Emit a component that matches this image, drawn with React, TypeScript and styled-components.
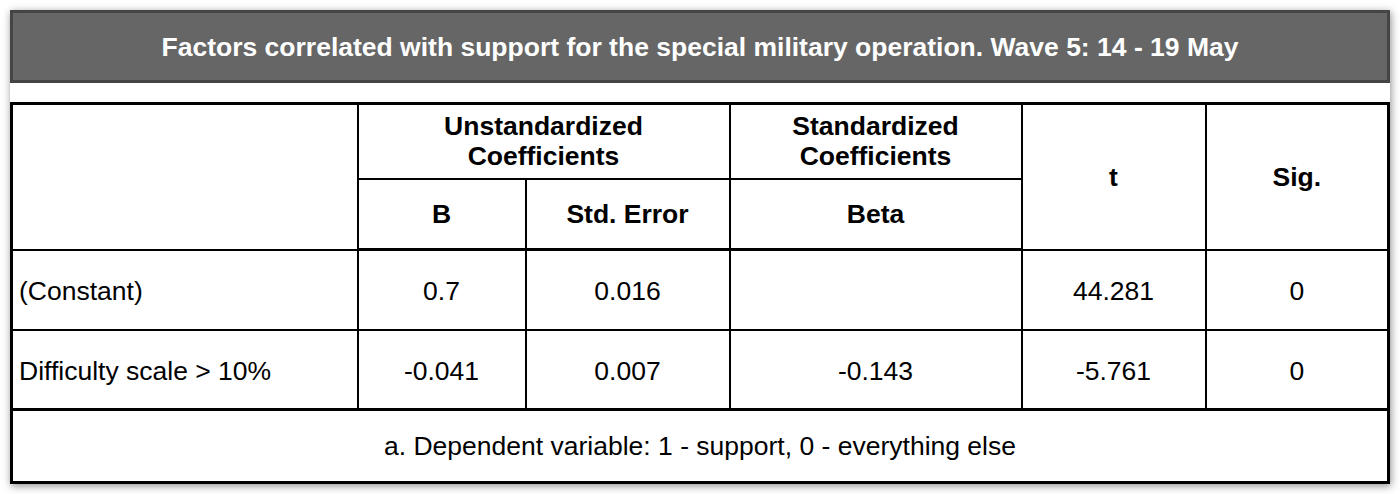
import styled, { createGlobalStyle } from 'styled-components';

const GlobalStyle = createGlobalStyle`
  body {
    margin: 0;
    background: #fff;
    font-family: 'Liberation Sans', Arial, sans-serif;
  }
`;

const rows = [
  { label: '(Constant)', b: '0.7', se: '0.016', beta: '', t: '44.281', sig: '0' },
  { label: 'Difficulty scale > 10%', b: '-0.041', se: '0.007', beta: '-0.143', t: '-5.761', sig: '0' },
];

export default function App() {
  return (
    <>
      <GlobalStyle />
      <Frame>
        <TitleBar>
          Factors correlated with support for the special military operation. Wave 5: 14 - 19 May
        </TitleBar>
        <Gap />
        <Table>
          <colgroup>
            <col style={{ width: 346 }} />
            <col style={{ width: 168 }} />
            <col style={{ width: 204 }} />
            <col style={{ width: 292 }} />
            <col style={{ width: 184 }} />
            <col style={{ width: 183 }} />
          </colgroup>
          <thead>
            <HeadRow $h={75}>
              <Th rowSpan={2} />
              <Th colSpan={2}>
                Unstandardized
                <br />
                Coefficients
              </Th>
              <Th>
                Standardized
                <br />
                Coefficients
              </Th>
              <Th rowSpan={2}>t</Th>
              <Th rowSpan={2}>Sig.</Th>
            </HeadRow>
            <HeadRow $h={71}>
              <Th>B</Th>
              <Th>Std. Error</Th>
              <Th>Beta</Th>
            </HeadRow>
          </thead>
          <tbody>
            {rows.map((r) => (
              <BodyRow key={r.label}>
                <Label>{r.label}</Label>
                <Td>{r.b}</Td>
                <Td>{r.se}</Td>
                <Td>{r.beta}</Td>
                <Td>{r.t}</Td>
                <Td>{r.sig}</Td>
              </BodyRow>
            ))}
          </tbody>
          <tfoot>
            <tr>
              <Footnote colSpan={6}>a. Dependent variable: 1 - support, 0 - everything else</Footnote>
            </tr>
          </tfoot>
        </Table>
      </Frame>
    </>
  );
}

const Frame = styled.div`
  margin: 10px;
  width: 1380px;
  background: #fff;
  box-shadow: 1px 2px 8px rgba(0, 0, 0, 0.45);
`;

const TitleBar = styled.div`
  box-sizing: border-box;
  height: 73px;
  display: flex;
  align-items: center;
  justify-content: center;
  background: #666666;
  border: 3px solid #454545;
  color: #fff;
  font-size: 26.5px;
  font-weight: bold;
  padding-top: 2px;
`;

const Gap = styled.div`
  height: 19px;
`;

const Table = styled.table`
  width: 1379px;
  table-layout: fixed;
  border-collapse: collapse;
  border: 3px solid #000;
  color: #000;
  font-size: 26.5px;

  thead tr:last-child th,
  tfoot td {
    border-bottom: 3px solid #000;
  }
  tfoot td {
    border-top: 3px solid #000;
  }
`;

const HeadRow = styled.tr<{ $h: number }>`
  height: ${(p) => p.$h}px;
`;

const Th = styled.th`
  border: 2px solid #000;
  font-weight: bold;
  text-align: center;
  vertical-align: middle;
  line-height: 30px;
  padding: 0 8px;
`;

const BodyRow = styled.tr`
  height: 80px;
`;

const Td = styled.td`
  border: 2px solid #000;
  text-align: center;
  vertical-align: middle;
  padding: 4px 8px 0;
`;

const Label = styled(Td)`
  text-align: left;
  padding-left: 6px;
`;

const Footnote = styled.td`
  height: 68px;
  text-align: center;
  vertical-align: middle;
  padding-top: 1px;
`;
